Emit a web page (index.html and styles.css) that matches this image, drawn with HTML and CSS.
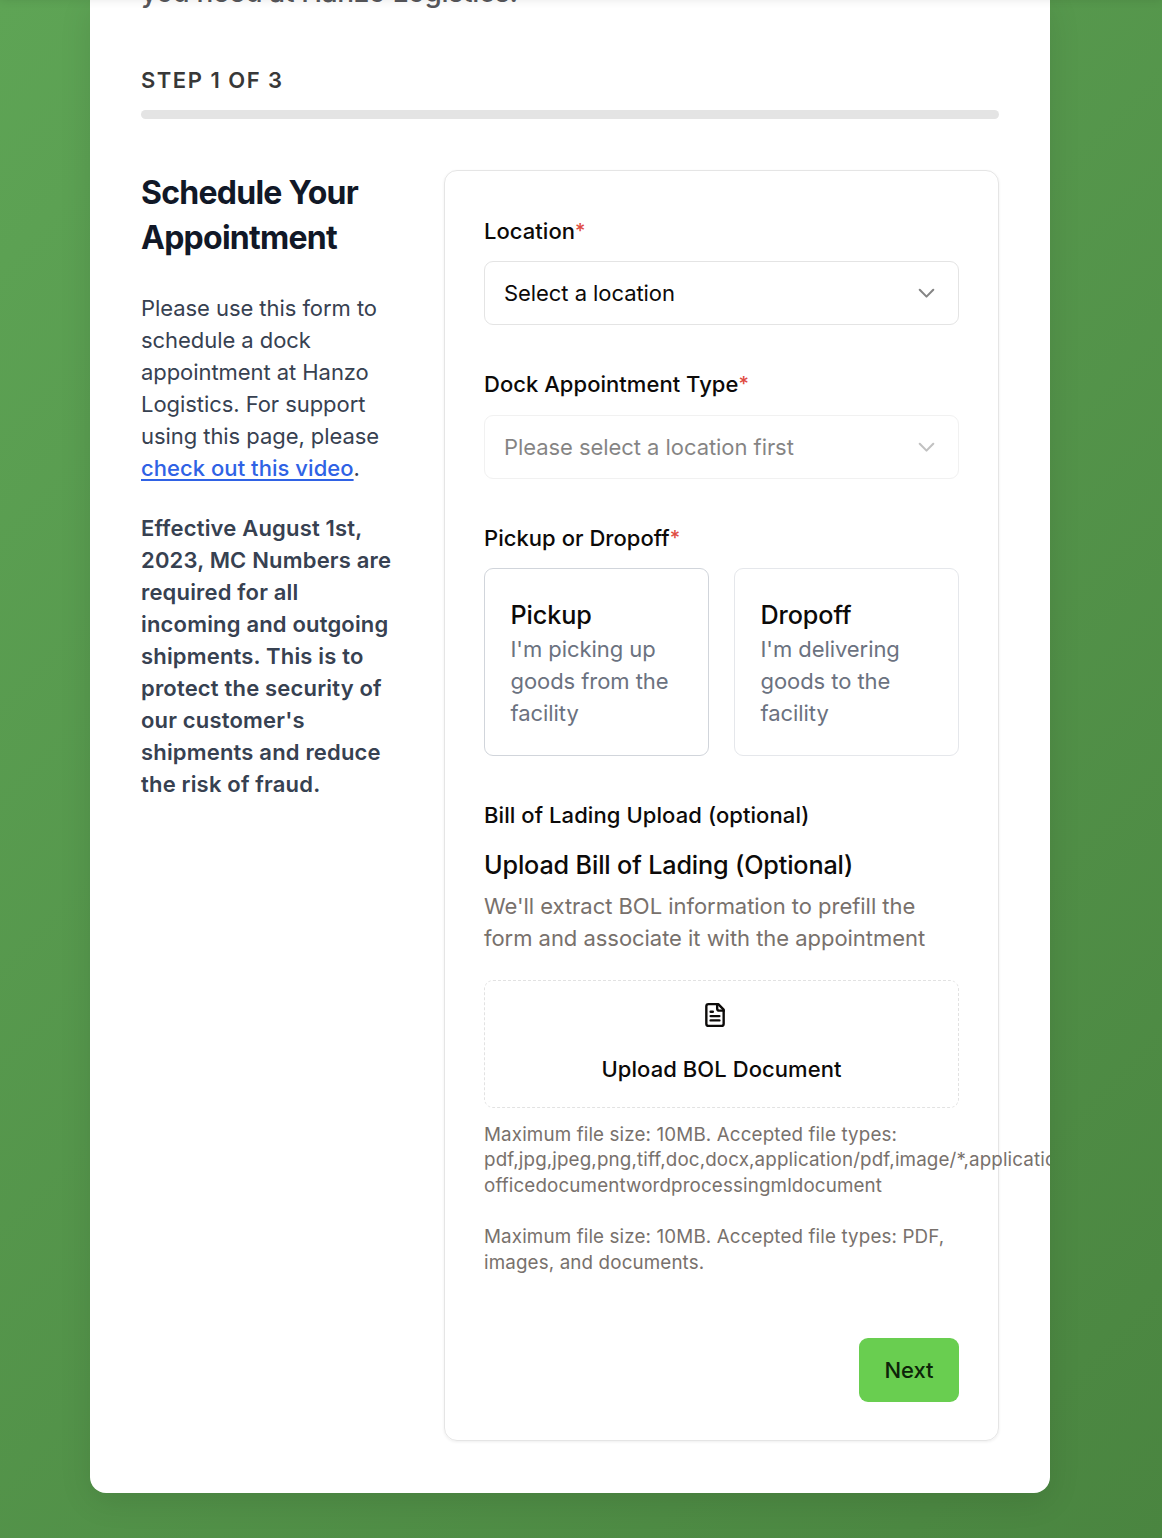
FILE: index.html
```html
<!DOCTYPE html>
<html lang="en">
<head>
<meta charset="utf-8">
<title>Schedule Your Appointment</title>
<link rel="stylesheet" href="styles.css">
</head>
<body>
<main class="sheet">
  <p class="intro">you need at Hanzo Logistics.</p>
  <p class="step">STEP 1 OF 3</p>
  <div class="progress"></div>
  <div class="columns">
    <aside class="info">
      <h1>Schedule Your<br>Appointment</h1>
      <p>Please use this form to<br>schedule a dock<br>appointment at Hanzo<br>Logistics. For support<br>using this page, please<br><a href="#">check out this video</a>.</p>
      <p class="notice">Effective August 1st,<br>2023, MC Numbers are<br>required for all<br>incoming and outgoing<br>shipments. This is to<br>protect the security of<br>our customer's<br>shipments and reduce<br>the risk of fraud.</p>
    </aside>
    <form class="form">
      <div class="field">
        <label class="label">Location<i>*</i></label>
        <div class="select"><span>Select a location</span>
          <svg class="chevron" viewBox="0 0 24 24"><path d="m5.5 8.5 6.5 6.5 6.5-6.5"/></svg></div>
      </div>
      <div class="field">
        <label class="label label-type">Dock Appointment Type<i>*</i></label>
        <div class="select disabled"><span>Please select a location first</span>
          <svg class="chevron" viewBox="0 0 24 24"><path d="m5.5 8.5 6.5 6.5 6.5-6.5"/></svg></div>
      </div>
      <div class="field">
        <label class="label">Pickup or Dropoff<i>*</i></label>
        <div class="options">
          <div class="option selected"><h3>Pickup</h3><p>I'm picking up<br>goods from the<br>facility</p></div>
          <div class="option"><h3>Dropoff</h3><p>I'm delivering<br>goods to the<br>facility</p></div>
        </div>
      </div>
      <label class="label upload-label">Bill of Lading Upload (optional)</label>
      <h2 class="upload-title">Upload Bill of Lading (Optional)</h2>
      <p class="upload-text">We'll extract BOL information to prefill the<br>form and associate it with the appointment</p>
      <div class="dropzone">
        <svg class="doc" viewBox="0 0 24 24"><path d="M15 2H6a2 2 0 0 0-2 2v16a2 2 0 0 0 2 2h12a2 2 0 0 0 2-2V7Z"/><path d="M14 2v4a2 2 0 0 0 2 2h4"/><path d="M10 9H8"/><path d="M16 13H8"/><path d="M16 17H8"/></svg>
        <span>Upload BOL Document</span>
      </div>
      <p class="hint">Maximum file size: 10MB. Accepted file types:<br>pdf,jpg,jpeg,png,tiff,doc,docx,application/pdf,image/*,application<br>officedocumentwordprocessingmldocument</p>
      <p class="hint">Maximum file size: 10MB. Accepted file types: PDF,<br>images, and documents.</p>
      <button class="next" type="button">Next</button>
    </form>
  </div>
</main>
</body>
</html>
```
FILE: styles.css
```css
* { box-sizing: border-box; }
html, body { height: 100%; }
body {
  margin: 0;
  padding: 0 112px 0 90px;
  overflow: hidden;
  background: linear-gradient(135deg, #5ea455 0%, #4a8540 100%);
  font-family: Inter, "Liberation Sans", sans-serif;
  font-size: 22px;
  line-height: 32px;
  letter-spacing: -0.06px;
  color: #0c0a09;
}
body::before {
  content: "";
  position: absolute;
  inset: -10px 0 auto 0;
  height: 10px;
  box-shadow: 0 0 10px rgba(0, 0, 0, 0.1);
  z-index: 1;
}
h1, h2, h3, p { margin: 0; font-weight: inherit; }
.sheet {
  height: 1493px;
  padding: 0 51px;
  overflow: hidden;
  background: #fff;
  border-radius: 0 0 16px 16px;
  box-shadow: 0 8px 32px rgba(0, 0, 0, 0.1);
}
.intro { height: 37px; margin-top: -17px; font-size: 28px; line-height: 18px; font-weight: 500; letter-spacing: -0.33px; color: #57575b; white-space: nowrap; }
.step { margin-top: 44px; font-weight: 600; letter-spacing: 1.5px; color: #383838; }
.progress { height: 9px; margin-top: 14px; border-radius: 5px; background: #e4e4e4; }
.columns { display: grid; grid-template-columns: 252px 555px; gap: 51px; margin-top: 51px; }
.info { color: #374151; white-space: nowrap; }
.info h1 { margin-bottom: 32px; font-size: 32px; line-height: 45px; font-weight: 700; letter-spacing: -0.74px; color: #111827; }
.info a { color: #2f62e5; font-weight: 500; letter-spacing: 0.05px; text-decoration: underline; text-underline-offset: 3px; text-decoration-thickness: 2px; text-decoration-skip-ink: none; }
.notice { margin-top: 28px; font-weight: 600; letter-spacing: 0.18px; }
.form {
  display: flex;
  flex-direction: column;
  height: 1271px;
  padding: 44px 39px 38px;
  border: 1px solid #e5e5e5;
  border-radius: 13px;
  box-shadow: 0 1px 3px rgba(0, 0, 0, 0.07);
}
.field { margin-bottom: 43px; }
.label { display: block; height: 32px; margin-bottom: 14px; font-weight: 500; letter-spacing: 0.04px; }
.label-type { margin-bottom: 15px; }
.label i { color: #df4c43; font-size: 20px; line-height: 1; font-style: normal; vertical-align: 1.5px; }
.select { display: flex; align-items: center; justify-content: space-between; height: 64px; padding: 0 19px; border: 1px solid #e4e4e4; border-radius: 9px; }
.disabled { opacity: 0.5; }
.chevron { width: 25px; height: 25px; fill: none; stroke: #858585; stroke-width: 2; stroke-linecap: round; stroke-linejoin: round; }
.options { display: grid; grid-template-columns: 1fr 1fr; gap: 25px; }
.option { height: 188px; padding: 26px 0 0 25.5px; border: 1px solid #e5e7eb; border-radius: 9px; white-space: nowrap; }
.selected { border-color: #d1d5db; }
.option h3 { height: 38px; line-height: 40px; font-size: 25.2px; font-weight: 500; letter-spacing: -0.1px; }
.option p { color: #6b7280; }
.upload-label { margin: 0; letter-spacing: 0.08px; }
.upload-title { margin-top: 14px; font-size: 25.2px; line-height: 40px; font-weight: 500; letter-spacing: -0.15px; white-space: nowrap; }
.upload-text { margin-top: 5px; color: #78716c; letter-spacing: -0.04px; white-space: nowrap; }
.dropzone { display: flex; flex-direction: column; align-items: center; height: 128px; margin-top: 26px; padding-top: 21px; border: 1px dashed #e2e2e2; border-radius: 9px; font-weight: 500; letter-spacing: 0.07px; }
.doc { width: 26px; height: 26px; margin: 0 13px 25px 0; fill: none; stroke: #0c0a09; stroke-width: 2.2; stroke-linecap: round; stroke-linejoin: round; }
.hint { margin-top: 13.6px; margin-bottom: 12px; font-size: 18.8px; line-height: 25.6px; letter-spacing: 0.13px; color: #78716c; white-space: nowrap; }
.next { align-self: flex-end; width: 100px; height: 64px; margin-top: auto; padding: 0; border: 0; border-radius: 9px; background: #69ce50; color: #0d2409; font: inherit; font-weight: 500; letter-spacing: inherit; }
```
